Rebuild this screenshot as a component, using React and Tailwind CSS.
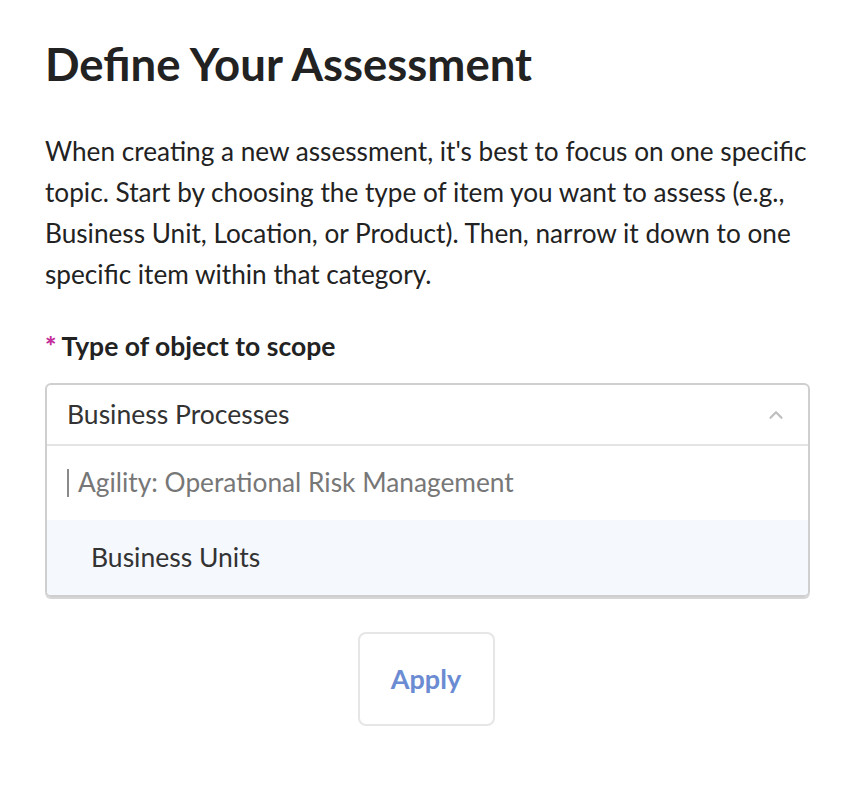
import React from 'react';
import { ChevronUp } from 'lucide-react';

const App = () => {
  return (
    <div className="w-[852px] h-[800px] bg-white px-[45px] pt-[34px] text-[#222]" style={{ fontFamily: 'Lato, "Noto Sans", sans-serif' }}>
      <h1 className="text-[45.5px] leading-[60px] font-bold text-[#222]">Define Your Assessment</h1>

      <p className="mt-[37px] text-[26.2px] leading-[41px] text-[#222] whitespace-nowrap">
        When creating a new assessment, it's best to focus on one specific<br />
        topic. Start by choosing the type of item you want to assess (e.g.,<br />
        Business Unit, Location, or Product). Then, narrow it down to one<br />
        specific item within that category.
      </p>

      <div className="mt-[33px] flex items-center text-[26.5px] leading-[36px] font-bold">
        <span className="text-[#c42d9a] mr-[5px] text-[27px] font-black">*</span>
        <span>Type of object to scope</span>
      </div>

      <div className="mt-[19px] w-[765px] rounded-[6px] border-2 border-[#cfcfcf] shadow-[0_2px_0_#d6d6d6] overflow-hidden">
        <div className="h-[61px] flex items-center justify-between px-[20px] border-b-2 border-[#e4e4e4]">
          <span className="text-[26.5px] text-[#333]">Business Processes</span>
          <ChevronUp size={22} strokeWidth={2.5} className="text-[#bfbfbf] mr-[1px]" />
        </div>
        <div className="h-[74px] flex items-center pl-[19px] pr-[19px] text-[26.3px] text-[#777]">
          <span className="inline-block w-[2px] h-[28px] bg-[#8a8a8a] ml-[1px] mr-[9px]" />
          Agility: Operational Risk Management
        </div>
        <div className="h-[75px] flex items-center px-[44px] bg-[#f5f8fd] text-[26.5px] text-[#333]">
          Business Units
        </div>
      </div>

      <div className="mt-[35px] flex justify-center">
        <button className="w-[137px] h-[94px] rounded-[8px] border-2 border-[#e6e6e6] bg-white text-[27px] font-bold text-[#6b8bd2]">
          Apply
        </button>
      </div>
    </div>
  );
};

export default App;
